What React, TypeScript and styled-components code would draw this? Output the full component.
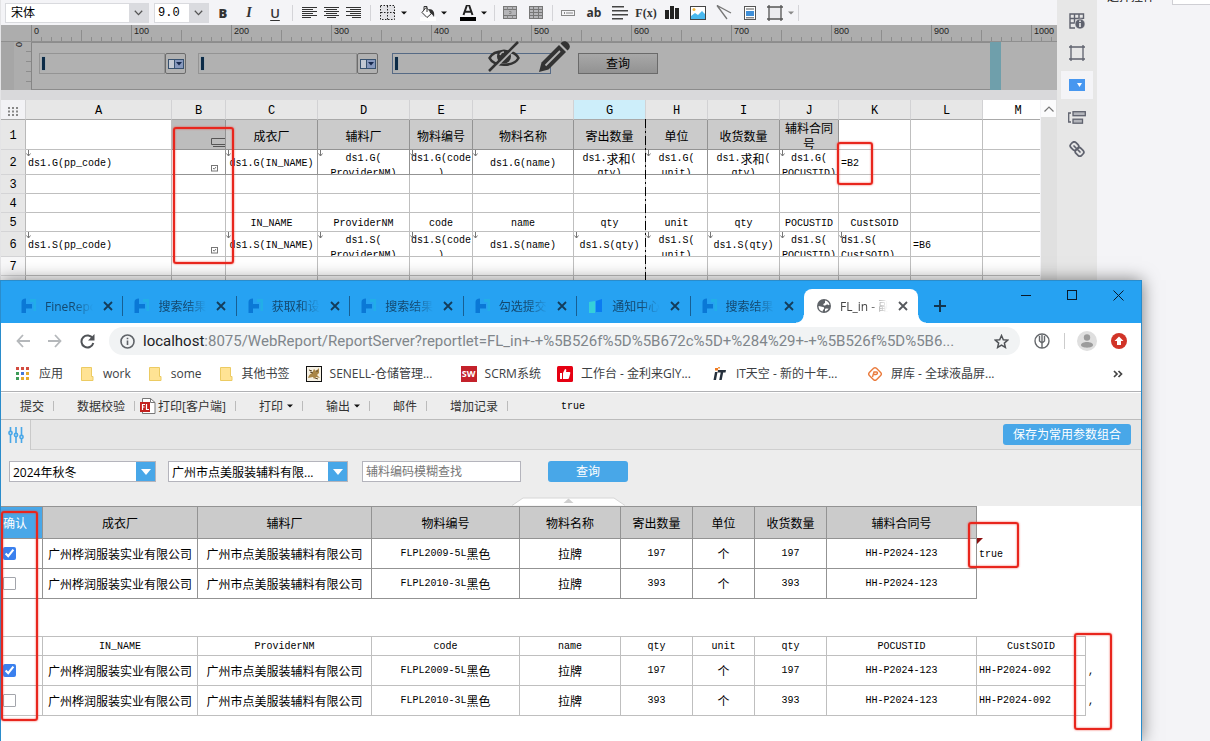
import React from "react";
import styled, { createGlobalStyle, css } from "styled-components";

const UI_FONT = `"Open Sans", "Noto Sans CJK SC", sans-serif`;
const SHEET_FONT = `"Liberation Mono", "Noto Sans CJK SC", monospace`;
const BLUE = "#48a7e8";

const GlobalStyle = createGlobalStyle`
  * { box-sizing: border-box; }
  body { margin: 0; background: #f4f4f7; font-family: ${UI_FONT}; font-size: 12px; color: #333; }
  button, input, select { font: inherit; color: inherit; margin: 0; padding: 0; border: 0; background: none; border-radius: 0; }
  svg { display: block; flex: none; }
  a { color: inherit; text-decoration: none; }
`;

/* ---------- shared text ---------- */

const Han = styled.span`
  font-family: "Noto Sans CJK SC", sans-serif;
  font-size: 12px;
  vertical-align: middle;
`;

const Mixed = ({ text }: { text: string }) => (
  <>
    {text.split(/([\u4e00-\u9fff]+)/).map((part, i) => (i % 2 ? <Han key={i}>{part}</Han> : part))}
  </>
);

/* ---------- desktop ---------- */

const Desktop = styled.div`
  position: relative;
  min-height: 100vh;
  overflow: hidden;
`;

const Designer = styled.div`
  display: flex;
  min-height: 100vh;
  border-left: 1px solid #e4e4e6;
`;

const DesignerMain = styled.div`
  flex: 1;
  min-width: 0;
  display: flex;
  flex-direction: column;
`;

/* ---------- designer toolbar ---------- */

const Toolbar = styled.div`
  display: flex;
  align-items: center;
  height: 25px;
  padding-left: 4px;
  background: #f4f4f7;
  overflow: hidden;
`;

const FontBox = styled.div<{ $w: number; $gap: number }>`
  display: flex;
  width: ${(p) => p.$w}px;
  height: 20px;
  margin-right: ${(p) => p.$gap}px;
  border: 1px solid #d9dade;
  background: #fff;
  select {
    flex: 1;
    min-width: 0;
    padding-left: 5px;
    appearance: none;
    color: #000;
  }
  span {
    display: flex;
    align-items: center;
    justify-content: center;
    width: 19px;
    background: #dadbdf;
  }
`;

const MonoSelect = styled.select`
  && {
    padding-left: 3px;
    font-family: "Liberation Mono", monospace;
    font-size: 12px;
  }
`;

const ToolGroup = styled.div<{ $l: number; $r: number }>`
  display: flex;
  height: 16px;
  padding: 0 ${(p) => p.$r}px 0 ${(p) => p.$l}px;
  border-right: 1px solid #d4d4d8;
`;

const ToolButton = styled.button<{ $w: number }>`
  display: flex;
  align-items: center;
  justify-content: center;
  gap: 5px;
  width: ${(p) => p.$w}px;
  height: 16px;
  color: #333;
`;

const Glyph = styled.span<{ $kind: "b" | "i" | "u" | "ab" | "fx" }>`
  line-height: 16px;
  font-weight: 800;
  font-size: 13px;
  font-family: "Open Sans", sans-serif;
  ${(p) => p.$kind === "i" && css`font-family: "Liberation Serif", serif; font-style: italic; font-size: 14px;`}
  ${(p) => p.$kind === "u" && css`text-decoration: underline; text-underline-offset: 2px; font-weight: 600;`}
  ${(p) => p.$kind === "ab" && css`font-size: 12px; font-weight: 700;`}
  ${(p) => p.$kind === "fx" && css`font-family: "Liberation Serif", serif; font-size: 12px; font-weight: 700;`}
`;

const Caret = ({ color = "#111" }: { color?: string }) => (
  <svg width="6" height="4" viewBox="0 0 6 4"><path d="M0 .5h6L3 3.5z" fill={color} /></svg>
);

const Chevron = () => (
  <svg width="9" height="6" viewBox="0 0 9 6" fill="none" stroke="#555" strokeWidth="1.3"><path d="M.8.8 4.5 4.6 8.200.8" /></svg>
);

const AlignIcon = ({ kind }: { kind: "left" | "center" | "right" }) => {
  const widths = [15, 11, 15, 11, 15, 9];
  return (
    <svg width="15" height="12" viewBox="0 0 15 12" shapeRendering="crispEdges">
      {widths.map((w, i) => {
        const x = kind === "left" ? 0 : kind === "right" ? 15 - w : (15 - w) / 2;
        return <rect key={i} x={x} y={i * 2} width={w} height="1" fill="#333" />;
      })}
    </svg>
  );
};

const BordersIcon = () => (
  <svg width="16" height="16" viewBox="0 0 16 16" fill="none" stroke="#222" strokeDasharray="1.500 1.500">
    <rect x=".5" y=".5" width="14" height="14" fill="#e2e2e6" />
    <path d="M7.500 1v14M1 7.500h14" />
  </svg>
);

const BucketIcon = () => (
  <svg width="16" height="16" viewBox="0 0 16 16" fill="none">
    <rect y="12" width="16" height="4" fill="#fff" />
    <path d="M6 2.500 12 8l-5 4.500L2 7.500z" stroke="#333" fill="#fff" />
    <path d="M4 5V1.500h3V7" stroke="#333" />
    <path d="M9 4c4 0 6 3 5 8-1-2-2-3-4-4z" fill="#333" />
  </svg>
);

const FontColorIcon = () => (
  <svg width="16" height="16" viewBox="0 0 16 16">
    <path d="M3.500 10 7 0h2l3.500 10M5 6.800h6" fill="none" stroke="#222" strokeWidth="2" />
    <rect y="12" width="16" height="4" fill="#000" />
  </svg>
);

const MergeIcon = ({ split }: { split?: boolean }) => (
  <svg width="14" height="13" viewBox="0 0 14 13" fill="none" stroke="#777">
    <rect x=".5" y=".5" width="13" height="12" fill="#b5b5b8" />
    <path d="M.5 3.500h13M.5 9.500h13" />
    {split ? <path d="M4.500.5v12M9.500.5v12M.5 6.500h13" /> : <path d="M4.500.5v3M9.500.5v3M4.500 9.500v3M9.500 9.500v3M6 5.500h2v2H6" stroke="#888" />}
  </svg>
);

const FieldIcon = () => (
  <svg width="14" height="6" viewBox="0 0 14 6" fill="none" stroke="#888">
    <rect x=".5" y=".5" width="13" height="5" /><path d="M3.500 2v2M5 3h7" />
  </svg>
);

const RichTextIcon = () => (
  <svg width="16" height="14" viewBox="0 0 16 14" fill="#444">
    <rect width="12" height="1.500" /><rect y="4" width="16" height="1.500" /><rect y="8" width="16" height="1.500" /><rect y="12" width="11" height="1.500" />
  </svg>
);

const ChartIcon = () => (
  <svg width="14" height="13" viewBox="0 0 14 13" fill="#222">
    <rect y="4" width="4" height="9" /><rect x="5" width="4" height="13" /><rect x="10" y="2" width="4" height="11" />
  </svg>
);

const PictureIcon = () => (
  <svg width="16" height="14" viewBox="0 0 16 14">
    <rect x=".5" y=".5" width="15" height="13" fill="#fff" stroke="#444" />
    <circle cx="4" cy="3.500" r="1.500" fill="#f5b942" />
    <path d="M1 10l4-3 3 2 4-4 3 3v5H1z" fill="#49b8ee" />
  </svg>
);

const SlantIcon = () => (
  <svg width="16" height="15" viewBox="0 0 16 15" fill="none" stroke="#777" strokeWidth="1.300">
    <path d="M1 .5 15 8M1 .5 11 14" />
  </svg>
);

const SubReportIcon = () => (
  <svg width="12" height="14" viewBox="0 0 12 14" fill="none" stroke="#555">
    <rect x=".5" y=".5" width="11" height="13" fill="#fff" />
    <rect x="2" y="5" width="8" height="5" fill="#3f8fd8" stroke="none" />
    <path d="M2 3h8M2 11.800h8" />
  </svg>
);

const FrameIcon = ({ color, fill = "none" }: { color: string; fill?: string }) => (
  <svg width="16" height="16" viewBox="0 0 16 16" fill="none" stroke={color} strokeWidth="1.300">
    <rect x="2" y="2" width="12" height="12" fill={fill} stroke="none" />
    <path d="M2 0v16M14 0v16M0 2h16M0 14h16" />
  </svg>
);

/* ---------- ruler and parameter pane ---------- */

const RULER_FONT = `"Liberation Sans", sans-serif`;

const Ruler = styled.div`
  display: flex;
  height: 17px;
  padding-left: 30px;
  overflow: hidden;
  background: #adadad;
  border-bottom: 1px solid #8f8f8f;
`;

const RulerCell = styled.div`
  flex: 0 0 100px;
  padding-left: 2px;
  border-left: 1px solid #888;
  font-family: ${RULER_FONT};
  font-size: 9px;
  line-height: 13px;
  color: #222;
  background:
    linear-gradient(#8d8d8d, #8d8d8d) 49px 5px / 1px 12px no-repeat,
    repeating-linear-gradient(to right, transparent 0 9px, #8d8d8d 9px 10px) 0 12px / 100% 5px no-repeat;
`;

const ParamPane = styled.div`
  position: relative;
  display: flex;
  height: 48px;
  background: #b1b1b1;
`;

const VerticalRuler = styled.div`
  width: 30px;
  flex: none;
  padding: 0 0 0 13px;
  background:
    repeating-linear-gradient(to bottom, transparent 0 9px, #8d8d8d 9px 10px) 25px 0 / 5px 100% no-repeat,
    linear-gradient(to right, #a6a6a6 13px, #adadad 13px);
  span {
    display: block;
    width: 10px;
    line-height: 10px;
    font-family: ${RULER_FONT};
    font-size: 9px;
    color: #222;
    writing-mode: vertical-rl;
  }
`;

const ParamCanvas = styled.div`
  flex: 1;
  display: flex;
  align-items: flex-start;
  min-width: 0;
  padding: 10px 0 0 7px;
  border-left: 1px solid #858585;
  border-top: 1px solid #8c8c8c;
  border-bottom: 1px solid #8c8c8c;
`;

const ParamHandle = styled.div`
  width: 11px;
  background: #6f9fab;
`;

const ParamRest = styled.div`
  width: 56px;
`;

const Widget = styled.div<{ $w: number; $gap: number; $active?: boolean }>`
  display: flex;
  width: ${(p) => p.$w}px;
  height: 21px;
  margin-right: ${(p) => p.$gap}px;
  > i {
    flex: 1;
    padding: 3px 0 0 2px;
    border: 1px solid ${(p) => (p.$active ? "#566a85" : "#949494")};
  }
  > i::before {
    content: "";
    display: block;
    width: 3px;
    height: 13px;
    background: #0c2b47;
    box-shadow: 0 0 1px #4a86b0;
  }
  > b {
    display: flex;
    align-items: center;
    justify-content: center;
    width: 21px;
    border: 1px solid #6c6c6c;
    border-radius: 2px;
  }
`;

const ComboMark = () => (
  <svg width="16" height="10" viewBox="0 0 16 10">
    <rect x=".5" y=".5" width="15" height="9" fill="#c3c9d3" stroke="#37516f" />
    <rect x="6.500" y=".5" width="9" height="9" fill="#8698bd" stroke="#37516f" />
    <path d="M8 3h6l-3 3.500z" fill="#16294f" />
  </svg>
);

const PaneQuery = styled.button`
  width: 80px;
  height: 21px;
  border: 1px solid #6a6a6a;
  background: linear-gradient(#a8a8a8, #929292);
  color: #000;
  font-size: 12px;
  line-height: 18px;
`;

const PaneActions = styled.div`
  position: absolute;
  top: -1px;
  left: 0;
  right: 0;
  display: flex;
  justify-content: center;
  gap: 19px;
`;

const Divider = styled.div`
  height: 10px;
  background: #d9d9db;
`;

/* ---------- designer sheet ---------- */

const SheetArea = styled.div`
  flex: 1;
  display: flex;
  min-height: 0;
  background: #fff;
`;

const SheetScroll = styled.div`
  position: relative;
  flex: 1;
  min-width: 0;
  overflow: hidden;
`;

const Sheet = styled.table`
  table-layout: fixed;
  width: 100%;
  min-width: 1053px;
  border-collapse: separate;
  border-spacing: 0;
  font-family: ${SHEET_FONT};
  font-size: 10px;
  line-height: 15px;
  color: #000;
`;

const ColHead = styled.th<{ $bg?: string }>`
  height: 20px;
  padding: 4px 0 0;
  border-right: 1px solid #d2d2d4;
  border-bottom: 1px solid #a9a9a9;
  background: ${(p) => p.$bg || "#e7e7e7"};
  font-weight: 400;
  font-size: 12px;
  line-height: 15px;
`;

const SelectAll = styled.button`
  display: block;
  margin: 0 auto;
`;

const RowHead = styled.th<{ $h: number; $light?: boolean }>`
  height: ${(p) => p.$h}px;
  padding: 3px 0 0;
  border-right: 1px solid #b9b9b9;
  border-bottom: 1px solid #d4d4d6;
  background: ${(p) => (p.$light ? "#f8f8f9" : "#e7e7e7")};
  font-weight: 400;
  font-size: 12px;
`;

const Cell = styled.td<{ $tone?: string; $dark?: boolean }>`
  position: relative;
  padding: 0;
  border-right: 1px solid ${(p) => (p.$dark ? "#939393" : "#bfbfbf")};
  border-bottom: 1px solid ${(p) => (p.$dark ? "#939393" : "#bfbfbf")};
  background: ${(p) => p.$tone || "#fff"};
`;

const CellText = styled.div<{ $h: number; $left?: boolean; $top?: boolean }>`
  display: flex;
  align-items: ${(p) => (p.$top ? "flex-start" : "center")};
  justify-content: ${(p) => (p.$left ? "flex-start" : "center")};
  height: ${(p) => p.$h}px;
  padding: ${(p) => (p.$top ? "1px 0 0" : "2px 0 0")} ${(p) => (p.$left ? "2px" : "0")};
  overflow: hidden;
  text-align: ${(p) => (p.$left ? "left" : "center")};
  white-space: pre;
`;

const ExpandMark = styled.svg`
  position: absolute;
  top: 0;
  left: 0;
`;

const WidgetMark = styled.svg`
  position: absolute;
  right: 0;
  bottom: 2px;
`;

const PageBreak = styled.div`
  position: absolute;
  top: 19px;
  bottom: 0;
  left: 644px;
  width: 1px;
  background: repeating-linear-gradient(to bottom, #000 0 9px, transparent 9px 12px, #000 12px 14px, transparent 14px 17px);
`;

const ScrollBar = styled.div`
  width: 17px;
  padding-right: 1px;
  border-left: 1px solid #f4f4f7;
  background: #e0e0e0;
  button {
    display: flex;
    align-items: center;
    justify-content: center;
    width: 100%;
    height: 17px;
    background: #fbfbfc;
  }
`;

type SheetCell = {
  t?: string;
  tone?: string;
  left?: boolean;
  top?: boolean;
  arrow?: boolean;
  mark?: "text" | "check";
};

const COLS = [146, 54, 92, 92, 63, 101, 72, 62, 72, 59, 72, 72, 72];
const LETTERS = "ABCDEFGHIJKLM".split("");
const H = "#cbcbcb";
const head = (t: string): SheetCell => ({ t, tone: H });
const one = (t: string, arrow = true): SheetCell => ({ t, arrow });
const two = (t: string, arrow = true): SheetCell => ({ t, arrow, top: true });
const none: SheetCell = {};

const SHEET_ROWS: { h: number; dark?: boolean; cells: SheetCell[] }[] = [
  {
    h: 30,
    dark: true,
    cells: [none, { tone: "#bdbdbd", mark: "text" }, head("成衣厂"), head("辅料厂"), head("物料编号"), head("物料名称"), head("寄出数量"), head("单位"), head("收货数量"), head("辅料合同\n号"), none, none, none],
  },
  {
    h: 25,
    dark: true,
    cells: [
      { t: "ds1.G(pp_code)", left: true, arrow: true }, { mark: "check" }, one("ds1.G(IN_NAME)"), two("ds1.G(\nProviderNM)"), two("ds1.G(code\n)"), one("ds1.G(name)"),
      two("ds1.求和(\nqty)", false), two("ds1.G(\nunit)"), two("ds1.求和(\nqty)", false), two("ds1.G(\nPOCUSTID)"), { t: "=B2", left: true }, none, none,
    ],
  },
  { h: 19, cells: Array(13).fill(none) },
  { h: 19, cells: Array(13).fill(none) },
  {
    h: 19,
    cells: ["", "", "IN_NAME", "ProviderNM", "code", "name", "qty", "unit", "qty", "POCUSTID", "CustSOID", "", ""].map((t) => ({ t })),
  },
  {
    h: 25,
    cells: [
      { t: "ds1.S(pp_code)", left: true, arrow: true }, { mark: "check" }, one("ds1.S(IN_NAME)"), two("ds1.S(\nProviderNM)"), two("ds1.S(code\n)"), one("ds1.S(name)"),
      one("ds1.S(qty)"), two("ds1.S(\nunit)"), one("ds1.S(qty)"), two("ds1.S(\nPOCUSTID)"), { t: "ds1.S(\nCustSOID)", left: true, top: true, arrow: true }, { t: "=B6", left: true }, none,
    ],
  },
  { h: 19, cells: Array(13).fill(none) },
  { h: 19, cells: Array(13).fill(none) },
];

/* ---------- right side of the designer ---------- */

const SideRail = styled.div`
  display: flex;
  flex-direction: column;
  align-items: center;
  gap: 4px;
  width: 40px;
  padding-top: 7px;
  background: #e7e7e7;
`;

const RailButton = styled.button<{ $on?: boolean }>`
  display: flex;
  align-items: center;
  justify-content: center;
  width: 32px;
  height: 28px;
  background: ${(p) => (p.$on ? "#f4f4f7" : "transparent")};
`;

const PropertyPanel = styled.div`
  width: 113px;
  background: #f4f4f7;
`;

const PropertyRow = styled.div`
  display: flex;
  align-items: flex-end;
  height: 5px;
  padding-left: 10px;
  overflow: hidden;
  label {
    width: 65px;
    line-height: 16px;
    color: #111;
  }
  input {
    flex: 1;
    min-width: 0;
    height: 20px;
    border: 1px solid #cfcfd4;
    border-right: 0;
    background: #fff;
  }
`;

/* ---------- browser window ---------- */

const Window = styled.div`
  position: absolute;
  top: 280px;
  left: 0;
  right: 68px;
  bottom: 0;
  display: flex;
  flex-direction: column;
  border: 1px solid #2a8ccb;
  border-bottom: 0;
  background: #fff;
  box-shadow: 0 0 16px rgba(0, 0, 0, 0.5);
`;

const TabStrip = styled.div`
  display: flex;
  align-items: flex-end;
  height: 42px;
  padding-left: 9px;
  background: #26a2f2;
`;

const Tabs = styled.div`
  flex: 0 1 794px;
  display: grid;
  grid-template-columns: repeat(7, 1fr);
  min-width: 0;
`;

const Tab = styled.div<{ $active?: boolean }>`
  position: relative;
  display: flex;
  align-items: center;
  gap: 8px;
  height: 34px;
  padding-left: 11px;
  color: #14486f;
  ${(p) =>
    p.$active
      ? css`
          flex: 0 0 114px;
          padding-left: 12px;
          border-radius: 8px 8px 0 0;
          background: #fff;
          color: #444;
          &::before, &::after {
            content: "";
            position: absolute;
            bottom: 0;
            left: -8px;
            width: 8px;
            height: 8px;
            background: radial-gradient(circle at 0 0, transparent 7px, #fff 8px);
          }
          &::after {
            left: auto;
            right: -8px;
            background: radial-gradient(circle at 100% 0, transparent 7px, #fff 8px);
          }
        `
      : css`
          &:not(:last-child)::after {
            content: "";
            position: absolute;
            right: 0;
            top: 7px;
            width: 1px;
            height: 20px;
            background: #185f93;
          }
        `}
`;

const TabTitle = styled.span`
  width: 48px;
  overflow: hidden;
  white-space: nowrap;
  line-height: 18px;
  padding-top: 1px;
  mask-image: linear-gradient(to right, #000 60%, transparent);
`;

const TabClose = styled.button`
  display: flex;
  align-items: center;
  justify-content: center;
  width: 14px;
  height: 14px;
`;

const NewTab = styled.button`
  display: flex;
  align-items: center;
  justify-content: center;
  width: 28px;
  height: 34px;
  margin-left: 8px;
`;

const WindowControls = styled.div`
  display: flex;
  align-self: flex-start;
  margin-left: auto;
  button {
    display: flex;
    align-items: center;
    justify-content: center;
    width: 46px;
    height: 28px;
  }
`;

const AddressRow = styled.div`
  display: flex;
  align-items: center;
  height: 36px;
  padding: 0 14px 0 6px;
`;

const NavButton = styled.button`
  display: flex;
  align-items: center;
  justify-content: center;
  width: 32px;
  height: 28px;
`;

const AddressPill = styled.div`
  flex: 1;
  display: flex;
  align-items: center;
  gap: 8px;
  min-width: 0;
  height: 28px;
  margin: 0 6px;
  padding: 0 11px;
  border-radius: 14px;
  background: #f1f3f4;
`;

const Url = styled.div`
  flex: 1;
  min-width: 0;
  white-space: nowrap;
  font-family: Roboto, "Open Sans", sans-serif;
  font-size: 15px;
  line-height: 20px;
  color: #80868b;
  span { color: #202124; }
`;

const BarLine = styled.i`
  width: 1px;
  height: 16px;
  margin: 0 12px 0 6px;
  background: #ccc;
`;

const AvatarButton = styled.button`
  margin-right: 14px;
`;

const Bookmarks = styled.nav`
  display: flex;
  align-items: center;
  gap: 16px;
  height: 33px;
  padding: 0 18px 2px 14px;
  border-bottom: 1px solid #b0b1b4;
  > button { margin-left: auto; }
`;

const Bookmark = styled.a<{ $long?: boolean }>`
  display: flex;
  align-items: center;
  gap: 8px;
  color: #3c4043;
  line-height: 18px;
  white-space: nowrap;
  ${(p) => p.$long && css`span { width: 115px; }`}
`;

/* ---------- report preview ---------- */

const ReportBar = styled.div`
  display: flex;
  align-items: center;
  height: 27px;
  margin-top: 1px;
  border-bottom: 1px solid #bcbcbc;
  background: #ededed;
`;

const ReportButton = styled.button<{ $icon?: boolean }>`
  display: flex;
  align-items: center;
  gap: ${(p) => (p.$icon ? 2 : 4)}px;
  height: 10px;
  padding: 0 9px 0 ${(p) => (p.$icon ? 5 : 23)}px;
  border-right: 1px solid #bbb;
  white-space: nowrap;
  &:first-child { padding-left: 19px; }
`;

const ReportValue = styled.span`
  margin-left: 53px;
  padding-top: 1px;
  font: 10px/15px ${SHEET_FONT};
  color: #000;
`;

const ParamHead = styled.div`
  display: flex;
  height: 30px;
  background: #e6e6e6;
`;

const ParamTab = styled.button`
  display: flex;
  align-items: center;
  justify-content: center;
  width: 30px;
  border-right: 1px solid #c9c9c9;
  background: #ededed;
`;

const ParamHeadRest = styled.div`
  flex: 1;
  display: flex;
  align-items: center;
  justify-content: flex-end;
  padding-right: 10px;
  border-bottom: 1px solid #cfcfcf;
`;

const BlueButton = styled.button<{ $w: number }>`
  width: ${(p) => p.$w}px;
  height: 21px;
  border-radius: 3px;
  background: ${BLUE};
  color: #fff;
  line-height: 21px;
`;

const ParamForm = styled.form`
  position: relative;
  display: flex;
  align-items: flex-start;
  height: 56px;
  padding: 11px 0 0 8px;
  background: #ededed;
`;

const Combo = styled.div<{ $w: number; $gap: number }>`
  display: flex;
  width: ${(p) => p.$w}px;
  height: 21px;
  margin-right: ${(p) => p.$gap}px;
  border: 1px solid #b4b4bc;
  background: #fff;
  select {
    flex: 1;
    min-width: 0;
    padding: 1px 0 0 3px;
    appearance: none;
    color: #000;
  }
  span {
    display: flex;
    align-items: center;
    justify-content: center;
    width: 19px;
    background: ${BLUE};
  }
`;

const SearchInput = styled.input`
  && {
    width: 159px;
    height: 21px;
    margin-right: 27px;
    padding-left: 3px;
    border: 1px solid #b4b4bc;
    background: #fff;
  }
  &::placeholder { color: #777; opacity: 1; }
`;

const CollapseHandle = styled.button`
  position: absolute;
  bottom: 0;
  left: 50%;
  margin-left: -60px;
`;

const ReportBody = styled.div`
  flex: 1;
  overflow: hidden;
`;

const Report = styled.table`
  table-layout: fixed;
  width: 100%;
  border-collapse: separate;
  border-spacing: 0;
  font-family: ${SHEET_FONT};
  font-size: 10px;
  line-height: 15px;
  color: #000;
`;

const RCell = styled.td<{ $h: number; $line?: string; $top?: boolean; $left?: boolean; $head?: boolean }>`
  position: relative;
  height: ${(p) => p.$h}px;
  padding: 0 ${(p) => (p.$left ? "2px" : "0")};
  text-align: ${(p) => (p.$left ? "left" : "center")};
  white-space: nowrap;
  ${(p) => p.$line && css`border-right: 1px solid ${p.$line}; border-bottom: 1px solid ${p.$line};`}
  ${(p) => p.$top && css`border-top: 1px solid ${p.$line};`}
  ${(p) => p.$head && css`background: ${H};`}
`;

const ConfirmCell = styled(RCell)`
  padding: 0 0 0 2px;
  background: ${BLUE};
  color: #fff;
  text-align: left;
`;

const CheckCell = styled(RCell)`
  text-align: left;
  input {
    display: block;
    width: 13px;
    height: 13px;
    margin: 0 0 0 2px;
    accent-color: #3a80ee;
  }
  input:not(:checked) {
    appearance: none;
    border: 1px solid #a3a5ab;
    border-radius: 1px;
    background: #fff;
  }
`;

const Corner = styled.i`
  position: absolute;
  top: -1px;
  left: 0;
  border-top: 6px solid #8e1010;
  border-right: 6px solid transparent;
`;

/* ---------- red annotations ---------- */

const Highlight = styled.div<{ $x: number; $y: number; $w: number; $h: number }>`
  position: absolute;
  left: ${(p) => p.$x}px;
  top: ${(p) => p.$y}px;
  width: ${(p) => p.$w}px;
  height: ${(p) => p.$h}px;
  border: 2px solid #e8261d;
  border-radius: 3px;
  box-shadow: 0 0 2px rgba(240, 60, 50, 0.9), inset 0 0 2px rgba(240, 60, 50, 0.9);
  pointer-events: none;
`;

/* ---------- window icons ---------- */

const Cross = ({ color }: { color: string }) => (
  <svg width="10" height="10" viewBox="0 0 10 10" stroke={color} strokeWidth="1.800"><path d="M1 1l8 8M9 1 1 9" /></svg>
);

const FineIcon = () => (
  <svg width="16" height="16" viewBox="0 0 16 16">
    <path d="M9 1h6v12h-2.500V4H9z" fill="#22aee8" />
    <path d="M.5 4c0-2 1.500-3.500 4.500-3.500V6h6v4.500H5V15H.5z" fill="#0a78d6" />
  </svg>
);

const NoticeIcon = () => (
  <svg width="16" height="16" viewBox="0 0 16 16">
    <path d="M1 4l6-1v12H1z" fill="#35cfd9" /><path d="M8 3l6-2v13H8z" fill="#0b7bf2" />
  </svg>
);

const GlobeIcon = () => (
  <svg width="16" height="16" viewBox="0 0 16 16">
    <circle cx="8" cy="8" r="7" fill="#5f6368" />
    <path d="M9 2.500c2.500.5 4 2 4.500 4.500-1 .5-1.500-.5-2.500-.5S9.500 8 8 7.500 7.500 5.500 9 5zM2.500 8c2 0 3 1 4.500 1s1.500 2 .5 2.500-.5 2-1 2C4 13 2.500 11 2.500 8zM9 11c2-1 2.500 0 3.500-.5-.5 1.500-1.500 2-3.500 3z" fill="#fff" />
  </svg>
);

const FolderIcon = () => (
  <svg width="16" height="16" viewBox="0 0 16 16">
    <path d="M2.500 1.500h10v9h1.500v4H2.500z" fill="#ffe394" stroke="#eccb62" />
  </svg>
);

const AppsIcon = () => {
  const colors = ["#d34b3f", "#d34b3f", "#d34b3f", "#3c9b57", "#4478d8", "#e4aa2c", "#3c9b57", "#e4aa2c", "#e4aa2c"];
  return (
    <svg width="16" height="16" viewBox="0 0 16 16">
      {colors.map((c, i) => <rect key={i} x={1 + (i % 3) * 5} y={1 + Math.floor(i / 3) * 5} width="3" height="3" fill={c} />)}
    </svg>
  );
};

const SenellIcon = () => (
  <svg width="16" height="16" viewBox="0 0 16 16">
    <rect x=".5" y=".5" width="15" height="15" fill="#f6f1e4" stroke="#111" />
    <path d="M2 12c1-3 2-4 4-5l2-4 2 2 3-3v5l-2 2 3 3-4-1-2 2-1-2z" fill="#a98546" />
    <path d="M3 4l3 1M4 6l3 1M9 12l3 1M11 4v2" stroke="#594425" />
  </svg>
);

const SwMark = styled.i`
  width: 16px;
  height: 16px;
  background: #c4222b;
  color: #fff;
  font: 700 9px/16px "Open Sans", sans-serif;
  text-align: center;
`;

const ThumbIcon = () => (
  <svg width="16" height="16" viewBox="0 0 16 16">
    <rect width="16" height="16" rx="1.500" fill="#e60012" />
    <path d="M3 7h2v6H3zM6 7l2-4c1.500 0 1.500 1 1 3h3.500c.8 0 1 .8.700 1.500L12 12c-.2.700-.6 1-1.200 1H6z" fill="#fff" />
  </svg>
);

const ItIcon = () => (
  <svg width="16" height="16" viewBox="0 0 16 16">
    <path d="M3 6h2.500L4 14H1.500zM6 4h8l-.5 2.500h-2.300L9.700 14H7.200l1.500-7.500H5.600z" fill="#26303c" />
    <path d="M3 2h3v2.500H3z" fill="#ee7a22" /><path d="M6 1h2v1.500H6z" fill="#f29a4a" />
  </svg>
);

const PingIcon = () => (
  <svg width="16" height="16" viewBox="0 0 16 16" fill="none" stroke="#ea7b3d" strokeWidth="1.400">
    <rect x="3" y="3" width="10" height="10" rx="2" transform="rotate(45 8 8)" />
    <path d="M5.500 11 7 6h2.500c1.500 0 1 2.500-.5 2.500H7" />
  </svg>
);

const FlIcon = () => (
  <svg width="16" height="16" viewBox="0 0 16 16">
    <path d="M2.500.5h8l4.500 4v11H2.500z" fill="#fff" stroke="#777" />
    <path d="M10.500.5v4H15" fill="none" stroke="#777" />
    <rect y="4" width="10" height="10" fill="#c3221f" />
    <path d="M2.500 12V6.500H5M2.500 9H4.500M6.500 6v5.500H9" fill="none" stroke="#fff" strokeWidth="1.200" />
  </svg>
);

const SlidersIcon = () => (
  <svg width="16" height="17" viewBox="0 0 16 17" fill="none" stroke={BLUE} strokeWidth="1.600">
    <path d="M2.500 0v4M2.500 8v8M8 0v6M8 10v6M13.500 0v8M13.500 12v4" />
    <circle cx="2.500" cy="6" r="1.600" /><circle cx="8" cy="8" r="1.600" /><circle cx="13.500" cy="10" r="1.600" />
  </svg>
);

const TABS = ["FineReport", "搜索结果页", "获取和设置", "搜索结果页", "勾选提交数", "通知中心 -", "搜索结果页"];

const BOOKMARKS: { label: string; icon: React.ReactNode; long?: boolean }[] = [
  { label: "应用", icon: <AppsIcon /> },
  { label: "work", icon: <FolderIcon /> },
  { label: "some", icon: <FolderIcon /> },
  { label: "其他书签", icon: <FolderIcon /> },
  { label: "SENELL-仓储管理...", icon: <SenellIcon />, long: true },
  { label: "SCRM系统", icon: <SwMark>SW</SwMark> },
  { label: "工作台 - 金利来GlY...", icon: <ThumbIcon />, long: true },
  { label: "IT天空 - 新的十年...", icon: <ItIcon />, long: true },
  { label: "屏库 - 全球液晶屏...", icon: <PingIcon />, long: true },
];

const R_COLS = [42, 155, 174, 148, 101, 72, 62, 72, 150, 109];
const G1 = "#939393";
const G2 = "#bfbfbf";
const R_HEAD = ["成衣厂", "辅料厂", "物料编号", "物料名称", "寄出数量", "单位", "收货数量", "辅料合同号"];
const R_NAMES = ["IN_NAME", "ProviderNM", "code", "name", "qty", "unit", "qty", "POCUSTID", "CustSOID"];
const R_DATA = [
  ["广州桦润服装实业有限公司", "广州市点美服装辅料有限公司", "FLPL2009-5L黑色", "拉牌", "197", "个", "197", "HH-P2024-123"],
  ["广州桦润服装实业有限公司", "广州市点美服装辅料有限公司", "FLPL2010-3L黑色", "拉牌", "393", "个", "393", "HH-P2024-123"],
];

const DesignerSheet = () => (
  <Sheet>
    <colgroup>
      <col style={{ width: 25 }} />
      {COLS.map((w, i) => <col key={i} style={i < 12 ? { width: w } : undefined} />)}
    </colgroup>
    <thead>
      <tr>
        <ColHead $bg="#f2f2f5">
          <SelectAll aria-label="全选">
            <svg width="11" height="9" viewBox="0 0 11 9" fill="#888">
              {[0, 1, 2].flatMap((r) => [0, 1, 2].map((c) => <rect key={`${r}${c}`} x={c * 4} y={r * 3.5} width="2" height="2" />))}
            </svg>
          </SelectAll>
        </ColHead>
        {LETTERS.map((l) => <ColHead key={l} $bg={l === "G" ? "#cdeefa" : l === "M" ? "#fff" : undefined}>{l}</ColHead>)}
      </tr>
    </thead>
    <tbody>
      {SHEET_ROWS.map((row, r) => (
        <tr key={r}>
          <RowHead $h={row.h} $light={r > 5}>{r + 1}</RowHead>
          {row.cells.map((c, i) => (
            <Cell key={i} $tone={c.tone} $dark={row.dark && i > 0 && i < 10}>
              <CellText $h={row.h - 1} $left={c.left} $top={c.top}><span><Mixed text={c.t || ""} /></span></CellText>
              {c.arrow && (
                <ExpandMark width="6" height="7" viewBox="0 0 6 7" fill="none" stroke="#777"><path d="M2.500 0v6M.5 3.500l2 2.500 2-2.500" /></ExpandMark>
              )}
              {c.mark === "text" && (
                <WidgetMark width="14" height="9" viewBox="0 0 14 9" fill="none" stroke="#555"><path d="M14 .5H.5v6H14M2 8.500h12" /></WidgetMark>
              )}
              {c.mark === "check" && (
                <WidgetMark width="14" height="7" viewBox="0 0 14 7" fill="none" stroke="#777"><rect x=".5" y=".5" width="6" height="5.500" /><path d="M2 3l1.200 1.200L5 2" /></WidgetMark>
              )}
            </Cell>
          ))}
        </tr>
      ))}
    </tbody>
  </Sheet>
);

const ReportSheet = () => (
  <Report>
    <colgroup>
      {R_COLS.map((w, i) => <col key={i} style={{ width: w }} />)}
      <col />
    </colgroup>
    <tbody>
      <tr>
        <ConfirmCell $h={33} $line={G1} $top><Han>确认</Han></ConfirmCell>
        {R_HEAD.map((t) => <RCell key={t} $h={33} $line={G1} $top $head><Mixed text={t} /></RCell>)}
        <RCell $h={33} colSpan={2} />
      </tr>
      {R_DATA.map((row, r) => (
        <tr key={r}>
          <CheckCell $h={30} $line={G1}><input type="checkbox" defaultChecked={r === 0} aria-label="确认" /></CheckCell>
          {row.map((t, i) => <RCell key={i} $h={30} $line={G1}><Mixed text={t} /></RCell>)}
          <RCell $h={30} $left colSpan={2}>{r === 0 && <><Corner />true</>}</RCell>
        </tr>
      ))}
      <tr><RCell $h={37} colSpan={11} /></tr>
      <tr>
        <RCell $h={20} $line={G2} $top />
        {R_NAMES.map((t, i) => <RCell key={i} $h={20} $line={G2} $top>{t}</RCell>)}
        <RCell $h={20} />
      </tr>
      {R_DATA.map((row, r) => (
        <tr key={r}>
          <CheckCell $h={30} $line={G2}><input type="checkbox" defaultChecked={r === 0} aria-label="确认" /></CheckCell>
          {row.map((t, i) => <RCell key={i} $h={30} $line={G2}><Mixed text={t} /></RCell>)}
          <RCell $h={30} $line={G2} $left>HH-P2024-092</RCell>
          <RCell $h={30} $left>,</RCell>
        </tr>
      ))}
    </tbody>
  </Report>
);

const BrowserWindow = () => (
  <Window>
    <TabStrip>
      <Tabs>
        {TABS.map((t, i) => (
          <Tab key={i}>
            {i === 5 ? <NoticeIcon /> : <FineIcon />}
            <TabTitle>{t}</TabTitle>
            <TabClose aria-label="关闭标签页"><Cross color="#143c5a" /></TabClose>
          </Tab>
        ))}
      </Tabs>
      <Tab $active>
        <GlobeIcon />
        <TabTitle>FL_in - 副本</TabTitle>
        <TabClose aria-label="关闭标签页"><Cross color="#55585c" /></TabClose>
      </Tab>
      <NewTab aria-label="新标签页">
        <svg width="12" height="12" viewBox="0 0 12 12" stroke="#12354f" strokeWidth="2"><path d="M6 0v12M0 6h12" /></svg>
      </NewTab>
      <WindowControls>
        <button aria-label="最小化"><svg width="10" height="10" stroke="#0a1a2a"><path d="M0 5.500h10" /></svg></button>
        <button aria-label="最大化"><svg width="10" height="10" stroke="#0a1a2a" fill="none"><rect x=".5" y=".5" width="9" height="9" /></svg></button>
        <button aria-label="关闭"><svg width="11" height="11" stroke="#0a1a2a"><path d="M.5.5l10 10M10.500.5l-10 10" /></svg></button>
      </WindowControls>
    </TabStrip>

    <AddressRow>
      <NavButton aria-label="后退"><svg width="14" height="14" fill="none" stroke="#b5b8bb" strokeWidth="1.800"><path d="M14 7H1.500M7 1 1.500 7 7 13" /></svg></NavButton>
      <NavButton aria-label="前进"><svg width="14" height="14" fill="none" stroke="#b5b8bb" strokeWidth="1.800"><path d="M0 7h12.500M7 1l5.500 6L7 13" /></svg></NavButton>
      <NavButton aria-label="重新加载">
        <svg width="15" height="15" viewBox="0 0 15 15" fill="none" stroke="#505357" strokeWidth="2"><path d="M12.700 4.500A6 6 0 1 0 13.300 9" /><path d="M14.500 0v6.500H8z" fill="#505357" stroke="none" /></svg>
      </NavButton>
      <AddressPill>
        <svg width="15" height="15" viewBox="0 0 15 15" fill="none" stroke="#5f6368" strokeWidth="1.600"><circle cx="7.500" cy="7.500" r="6.500" /><path d="M7.500 6.500V11M7.500 3.800v1.500" /></svg>
        <Url><span>localhost</span>:8075/WebReport/ReportServer?reportlet=FL_in+-+%5B526f%5D%5B672c%5D+%284%29+-+%5B526f%5D%5B6...</Url>
        <svg width="15" height="15" viewBox="0 0 24 24" fill="none" stroke="#505357" strokeWidth="2.400"><path d="M12 2.500l2.900 6.700 7.100.6-5.400 4.700 1.600 7-6.200-3.700-6.200 3.700 1.600-7L2 9.800l7.100-.6z" /></svg>
      </AddressPill>
      <NavButton aria-label="扩展程序">
        <svg width="16" height="16" viewBox="0 0 16 16" fill="none" stroke="#65686c" strokeWidth="1.400"><circle cx="8" cy="8" r="7" /><path d="M8 2v13M5.500 3v5l2.500 2 2.500-2V3" /></svg>
      </NavButton>
      <BarLine />
      <AvatarButton aria-label="用户">
        <svg width="20" height="20" viewBox="0 0 20 20"><circle cx="10" cy="10" r="10" fill="#dfdfdf" /><circle cx="10" cy="6.500" r="3.200" fill="#9b9b9b" /><path d="M4 14c0-4 12-4 12 0 0 3.500-12 3.500-12 0z" fill="#9b9b9b" /></svg>
      </AvatarButton>
      <button aria-label="更新">
        <svg width="16" height="16" viewBox="0 0 16 16"><circle cx="8" cy="8" r="8" fill="#d13428" /><path d="M8 3.500 12.500 8H10v4H6V8H3.500z" fill="#fff" /></svg>
      </button>
    </AddressRow>

    <Bookmarks>
      {BOOKMARKS.map((b) => (
        <Bookmark key={b.label} href="#" $long={b.long}>{b.icon}<span>{b.label}</span></Bookmark>
      ))}
      <button aria-label="更多书签"><svg width="10" height="8" fill="none" stroke="#444" strokeWidth="1.700"><path d="M1 1l3 3-3 3M5.500 1l3 3-3 3" /></svg></button>
    </Bookmarks>

    <ReportBar>
      <ReportButton>提交</ReportButton>
      <ReportButton>数据校验</ReportButton>
      <ReportButton $icon><FlIcon />打印[客户端]</ReportButton>
      <ReportButton>打印<Caret /></ReportButton>
      <ReportButton>输出<Caret /></ReportButton>
      <ReportButton>邮件</ReportButton>
      <ReportButton>增加记录</ReportButton>
      <ReportValue>true</ReportValue>
    </ReportBar>

    <ParamHead>
      <ParamTab aria-label="参数"><SlidersIcon /></ParamTab>
      <ParamHeadRest><BlueButton $w={128}>保存为常用参数组合</BlueButton></ParamHeadRest>
    </ParamHead>

    <ParamForm onSubmit={(e) => e.preventDefault()}>
      <Combo $w={147} $gap={12}>
        <select aria-label="季节"><option>2024年秋冬</option></select>
        <span><svg width="10" height="6"><path d="M0 0h10L5 6z" fill="#fff" /></svg></span>
      </Combo>
      <Combo $w={180} $gap={14}>
        <select aria-label="辅料厂"><option>广州市点美服装辅料有限...</option></select>
        <span><svg width="10" height="6"><path d="M0 0h10L5 6z" fill="#fff" /></svg></span>
      </Combo>
      <SearchInput aria-label="辅料编码" placeholder="辅料编码模糊查找" />
      <BlueButton $w={80}>查询</BlueButton>
      <CollapseHandle type="button" aria-label="收起参数面板">
        <svg width="115" height="9" viewBox="0 0 115 9"><path d="M1 8.500 12 1h91l11 7.500" fill="#fff" stroke="#d6d6d6" /><path d="M52.500 6h10L57.500 1.500z" fill="#cfcfcf" /></svg>
      </CollapseHandle>
    </ParamForm>

    <ReportBody><ReportSheet /></ReportBody>
  </Window>
);

export default function App() {
  return (
    <Desktop>
      <GlobalStyle />
      <Designer>
        <DesignerMain>
          <Toolbar>
            <FontBox $w={144} $gap={5}><select aria-label="字体"><option>宋体</option></select><span><Chevron /></span></FontBox>
            <FontBox $w={55} $gap={1}><MonoSelect aria-label="字号"><option>9.0</option></MonoSelect><span><Chevron /></span></FontBox>
            <ToolGroup $l={0} $r={4}>
              <ToolButton $w={26}><Glyph $kind="b">B</Glyph></ToolButton>
              <ToolButton $w={26}><Glyph $kind="i">I</Glyph></ToolButton>
              <ToolButton $w={26}><Glyph $kind="u">U</Glyph></ToolButton>
            </ToolGroup>
            <ToolGroup $l={5} $r={6}>
              <ToolButton $w={22} aria-label="左对齐"><AlignIcon kind="left" /></ToolButton>
              <ToolButton $w={22} aria-label="居中"><AlignIcon kind="center" /></ToolButton>
              <ToolButton $w={22} aria-label="右对齐"><AlignIcon kind="right" /></ToolButton>
            </ToolGroup>
            <ToolGroup $l={2} $r={1}>
              <ToolButton $w={40} aria-label="边框"><BordersIcon /><Caret /></ToolButton>
              <ToolButton $w={40} aria-label="填充颜色"><BucketIcon /><Caret /></ToolButton>
              <ToolButton $w={40} aria-label="字体颜色"><FontColorIcon /><Caret /></ToolButton>
            </ToolGroup>
            <ToolGroup $l={2} $r={3}>
              <ToolButton $w={26} aria-label="合并单元格"><MergeIcon /></ToolButton>
              <ToolButton $w={26} aria-label="取消合并"><MergeIcon split /></ToolButton>
            </ToolGroup>
            <ToolGroup $l={2} $r={1}>
              <ToolButton $w={26} aria-label="数据列"><FieldIcon /></ToolButton>
              <ToolButton $w={26}><Glyph $kind="ab">ab</Glyph></ToolButton>
              <ToolButton $w={26} aria-label="富文本"><RichTextIcon /></ToolButton>
              <ToolButton $w={26}><Glyph $kind="fx">F(x)</Glyph></ToolButton>
              <ToolButton $w={26} aria-label="图表"><ChartIcon /></ToolButton>
              <ToolButton $w={26} aria-label="图片"><PictureIcon /></ToolButton>
              <ToolButton $w={26} aria-label="斜线"><SlantIcon /></ToolButton>
              <ToolButton $w={26} aria-label="子报表"><SubReportIcon /></ToolButton>
              <ToolButton $w={34} aria-label="悬浮元素"><FrameIcon color="#555" fill="#ececef" /><Caret color="#888" /></ToolButton>
            </ToolGroup>
          </Toolbar>

          <Ruler>
            {[0, 100, 200, 300, 400, 500, 600, 700, 800, 900, 1000].map((n) => <RulerCell key={n}>{n}</RulerCell>)}
          </Ruler>
          <ParamPane>
            <VerticalRuler><span>0</span></VerticalRuler>
            <ParamCanvas>
              <Widget $w={147} $gap={12}><i /><b><ComboMark /></b></Widget>
              <Widget $w={180} $gap={14}><i /><b><ComboMark /></b></Widget>
              <Widget $w={159} $gap={27} $active><i /></Widget>
              <PaneQuery>查询</PaneQuery>
            </ParamCanvas>
            <ParamHandle />
            <ParamRest />
            <PaneActions>
              <svg width="32" height="31" viewBox="0 0 32 31" fill="none" stroke="#333" strokeWidth="2.500">
                <path d="M1.500 17C6 8 26 8 30.500 17 26 26 6 26 1.500 17z" />
                <circle cx="16" cy="15.500" r="7" fill="#333" stroke="none" />
                <path d="M12 14c.5-2 2-3 4-3" stroke="#b1b1b1" strokeWidth="1.500" />
                <path d="M3 31 32 2" stroke="#b1b1b1" strokeWidth="2" />
                <path d="M1 30 30 1" />
              </svg>
              <svg width="31" height="31" viewBox="0 0 31 31" fill="#333">
                <path d="M0 31 2.500 21.500 20 4l7 7L9.500 28.500z" />
                <path d="M21.500 2.500 23 1c4-3 10 3 7 7l-1.500 1.500z" />
                <path d="M6.500 24.500 21 10" stroke="#b1b1b1" strokeWidth="1.800" />
              </svg>
            </PaneActions>
          </ParamPane>
          <Divider />

          <SheetArea>
            <SheetScroll>
              <DesignerSheet />
              <PageBreak />
            </SheetScroll>
            <ScrollBar>
              <button aria-label="向上滚动"><svg width="10" height="6" fill="none" stroke="#777" strokeWidth="1.200"><path d="M.5 5.500 5 1l4.500 4.500" /></svg></button>
            </ScrollBar>
          </SheetArea>
        </DesignerMain>

        <SideRail>
          <RailButton aria-label="单元格属性">
            <svg width="16" height="16" viewBox="0 0 16 16" fill="none" stroke="#5f626e" strokeWidth="1.400">
              <path d="M14.500 6V1H1v14h5M1 5.500h13M1 10h5M5.500 1v9M10 1v4" />
              <circle cx="11" cy="11" r="5" fill="#5f626e" stroke="#e7e7e7" strokeWidth=".6" />
              <path d="M11 10v4M11 7.500v1.500" stroke="#fff" />
            </svg>
          </RailButton>
          <RailButton aria-label="悬浮元素"><FrameIcon color="#5f626e" /></RailButton>
          <RailButton $on aria-label="控件设置">
            <svg width="16" height="12"><rect width="16" height="12" fill="#4797f0" /><path d="M8 4h5l-2.500 4z" fill="#fff" /></svg>
          </RailButton>
          <RailButton aria-label="条件属性">
            <svg width="18" height="13" viewBox="0 0 18 13" fill="#b3b5bb" stroke="#5f626e" strokeWidth="1.300">
              <path d="M3 2H.7v9H3" fill="none" /><rect x="5" y=".7" width="12.300" height="4" /><rect x="5" y="8.200" width="9.500" height="4" />
            </svg>
          </RailButton>
          <RailButton aria-label="超级链接">
            <svg width="16" height="16" viewBox="0 0 24 24" fill="none" stroke="#5f626e" strokeWidth="2.600" strokeLinecap="round">
              <path d="M13.500 10.500c1.500-1.500 1.500-3.500 0-5L10.500 2.500c-1.500-1.500-4-1.500-5.500 0l-2 2c-1.500 1.500-1.500 4 0 5.500l3 3c1.500 1.500 3.500 1.500 5 0" />
              <path d="M10.500 13.500c-1.500 1.500-1.500 3.500 0 5l3 3c1.500 1.500 4 1.500 5.500 0l2-2c1.500-1.500 1.500-4 0-5.500l-3-3c-1.500-1.500-3.500-1.500-5 0" />
              <path d="M7.500 7.500l9 9" />
            </svg>
          </RailButton>
        </SideRail>
        <PropertyPanel>
          <PropertyRow><label htmlFor="widget-kind">选择控件</label><input id="widget-kind" /></PropertyRow>
        </PropertyPanel>
      </Designer>

      <BrowserWindow />

      <Highlight $x={173} $y={127} $w={61} $h={137} />
      <Highlight $x={837} $y={142} $w={36} $h={43} />
      <Highlight $x={968} $y={522} $w={51} $h={46} />
      <Highlight $x={1074} $y={633} $w={38} $h={97} />
      <Highlight $x={1} $y={511} $w={37} $h={210} />
    </Desktop>
  );
}
